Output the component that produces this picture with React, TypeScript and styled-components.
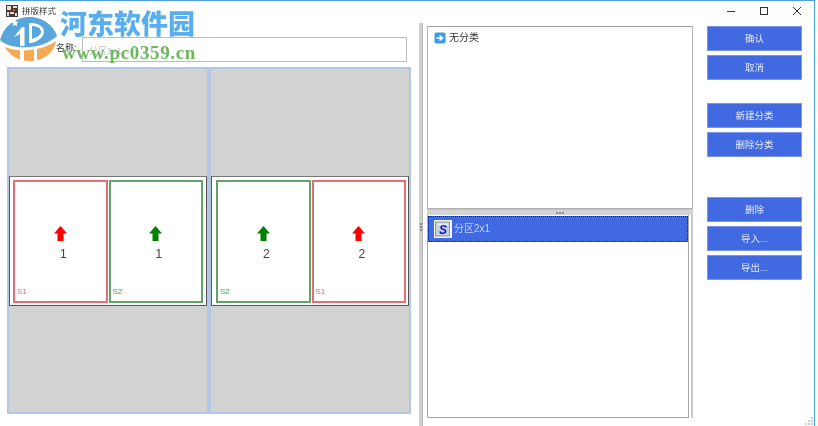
import React from "react";
import styled, { createGlobalStyle } from "styled-components";

const GlobalStyle = createGlobalStyle`
  html, body {
    margin: 0;
    padding: 0;
    background: #fff;
    overflow: hidden;
  }
  body {
    font-family: "Liberation Sans", "Noto Sans CJK SC", sans-serif;
  }
`;

const App: React.FC = () => {
  return (
    <>
      <GlobalStyle />
      <Window>
        <TitleBar>
          <AppIcon />
          <TitleText>拼版样式</TitleText>
          <WindowControls>
            <ControlButton>
              <svg width="10" height="10" viewBox="0 0 10 10">
                <path d="M1 5.500h8" stroke="#333" strokeWidth="1" />
              </svg>
            </ControlButton>
            <ControlButton>
              <svg width="10" height="10" viewBox="0 0 10 10">
                <rect x="1.500" y="1.500" width="7" height="7" fill="none" stroke="#333" strokeWidth="1" />
              </svg>
            </ControlButton>
            <ControlButton>
              <svg width="10" height="10" viewBox="0 0 10 10">
                <path d="M1 1l8 8M9 1l-8 8" stroke="#333" strokeWidth="1" />
              </svg>
            </ControlButton>
          </WindowControls>
        </TitleBar>
        <Body>
          <LeftPane>
            <NameRow>
              <NameLabel>名称:</NameLabel>
              <NameInput>分区2x1</NameInput>
            </NameRow>
            <Sheet>
              <Page>
                <Band $lead={3}>
                  <Card $edge="#e66e72">
                    <UpArrow color="#ff0000" />
                    <CardNumber>1</CardNumber>
                    <CardTag $tint="#f4666a">S1</CardTag>
                  </Card>
                  <Card $edge="#62a467">
                    <UpArrow color="#008000" />
                    <CardNumber>1</CardNumber>
                    <CardTag $tint="#44a84e">S2</CardTag>
                  </Card>
                </Band>
              </Page>
              <Page>
                <Band $lead={4}>
                  <Card $edge="#62a467">
                    <UpArrow color="#008000" />
                    <CardNumber>2</CardNumber>
                    <CardTag $tint="#44a84e">S2</CardTag>
                  </Card>
                  <Card $edge="#e66e72">
                    <UpArrow color="#ff0000" />
                    <CardNumber>2</CardNumber>
                    <CardTag $tint="#f4666a">S1</CardTag>
                  </Card>
                </Band>
              </Page>
            </Sheet>
          </LeftPane>
          <VerticalSplitter>
            <GripDots $vertical />
          </VerticalSplitter>
          <RightPane>
            <ListColumn>
              <CategoryList>
                <CategoryRow>
                  <svg width="12" height="12" viewBox="0 0 12 12">
                    <rect x="0.500" y="0.500" width="11" height="11" rx="2" fill="#3a9be8" />
                    <path d="M2.500 6h5M5.500 3.500L8.500 6l-3 2.500" fill="none" stroke="#fff" strokeWidth="1.600" />
                  </svg>
                  <RowLabel>无分类</RowLabel>
                </CategoryRow>
              </CategoryList>
              <HorizontalSplitter>
                <GripDots />
              </HorizontalSplitter>
              <LowerRow>
                <TemplateList>
                  <TemplateRow>
                    <svg width="18" height="18" viewBox="0 0 18 18">
                      <rect width="18" height="18" fill="#f4f6f8" />
                      <rect x="1.500" y="2" width="14" height="14" fill="#c6d0d6" stroke="#8d9aa2" />
                      <path d="M3 3.500h11v2H3z" fill="#e8edf0" />
                      <text x="5" y="14" fontSize="12" fontWeight="700" fontStyle="italic" fill="#1414e0" fontFamily="Liberation Sans">
                        S
                      </text>
                    </svg>
                    <RowLabel>分区2x1</RowLabel>
                  </TemplateRow>
                </TemplateList>
                <ListEdge />
              </LowerRow>
            </ListColumn>
            <ButtonColumn>
              <ButtonGroup>
                <ActionButton>确认</ActionButton>
                <ActionButton>取消</ActionButton>
              </ButtonGroup>
              <ButtonGroup $top={23}>
                <ActionButton>新建分类</ActionButton>
                <ActionButton>删除分类</ActionButton>
              </ButtonGroup>
              <ButtonGroup $top={40}>
                <ActionButton>删除</ActionButton>
                <ActionButton>导入...</ActionButton>
                <ActionButton>导出...</ActionButton>
              </ButtonGroup>
            </ButtonColumn>
          </RightPane>
        </Body>

        {/* watermark sits on top of the window */}
        <Watermark>
          <LogoMark width="57" height="46" viewBox="0 0 57 46">
            <path d="M0 25C4 10 16 2 30 2c14 0 24 10 27 19-7 6-15 10-27 11C16 33 6 31 0 25z" fill="#58a6dc" />
            <path d="M5 32c15 6 37 4 51-6-2 12-12 20-26 20C18 46 9 40 5 32z" fill="#f6a94e" />
            <path d="M20 31V19l-6 3 8-10h2.500v19z" fill="#fff" />
            <path d="M29 8h2c8 0 13 4 13 9 0 5-6 9-12 11h-3z" fill="#fff" />
            <path d="M32 11v13c5-2 9-4 9-7 0-4-4-6-9-6z" fill="#58a6dc" />
            <path d="M20 34h4v12h-4zM34 34h3v12h-3z" fill="#fff" />
            <path d="M15 4l1 2.600 2.600.3-2 1.700.6 2.600-2.200-1.400-2.200 1.400.6-2.600-2-1.700 2.600-.3z" fill="#fff" />
          </LogoMark>
          <WatermarkText>
            <WatermarkName>河东软件园</WatermarkName>
            <WatermarkUrl>www.pc0359.cn</WatermarkUrl>
          </WatermarkText>
        </Watermark>

        <ResizeGrip>
          <svg width="9" height="9" viewBox="0 0 9 9" fill="#c4cfdc">
            <rect x="7" y="1" width="2" height="2" />
            <rect x="4" y="4" width="2" height="2" />
            <rect x="7" y="4" width="2" height="2" />
            <rect x="1" y="7" width="2" height="2" />
            <rect x="4" y="7" width="2" height="2" />
            <rect x="7" y="7" width="2" height="2" />
          </svg>
        </ResizeGrip>
      </Window>
    </>
  );
};

const AppIcon: React.FC = () => (
  <svg width="12" height="12" viewBox="0 0 12 12">
    <rect width="12" height="12" fill="#4a3a34" />
    <rect x="1" y="1" width="4" height="4" fill="#e8ded8" />
    <rect x="7" y="1" width="4" height="2" fill="#e8ded8" />
    <rect x="7" y="4" width="2" height="2" fill="#c9503c" />
    <rect x="1" y="7" width="2" height="4" fill="#e8ded8" />
    <rect x="4" y="7" width="4" height="2" fill="#e8ded8" />
    <rect x="9" y="8" width="2" height="3" fill="#e8ded8" />
  </svg>
);

const UpArrow: React.FC<{ color: string }> = ({ color }) => (
  <ArrowIcon width="13" height="15" viewBox="0 0 13 15">
    <path d="M6.500 0L13 7.500H9.500V15h-6V7.500H0z" fill={color} />
  </ArrowIcon>
);

export default App;

const Window = styled.div`
  position: relative;
  box-sizing: border-box;
  width: 815px;
  height: 426px;
  display: flex;
  flex-direction: column;
  background: #fff;
  border-top: 1px solid #4ba3e6;
  border-right: 1px solid #4ba3e6;
  overflow: hidden;
  filter: blur(0.3px);
`;

const TitleBar = styled.div`
  box-sizing: border-box;
  flex: 0 0 22px;
  display: flex;
  align-items: center;
  padding: 0 1px 2px 6px;
  gap: 4px;
`;

const TitleText = styled.span`
  font-size: 8.500px;
  line-height: 12px;
  color: #333;
`;

const WindowControls = styled.div`
  display: flex;
  margin-left: auto;
`;

const ControlButton = styled.div`
  width: 33px;
  height: 20px;
  display: flex;
  align-items: center;
  justify-content: center;
`;

const Body = styled.div`
  flex: 1;
  display: flex;
  min-height: 0;
`;

const LeftPane = styled.div`
  box-sizing: border-box;
  flex: 0 0 419px;
  padding-left: 7px;
`;

const NameRow = styled.div`
  display: flex;
  align-items: center;
  margin-top: 14px;
  padding-left: 49px;
`;

const NameLabel = styled.span`
  flex: 0 0 26px;
  margin-top: -5px;
  font-size: 9px;
  color: #333;
`;

const NameInput = styled.div`
  box-sizing: border-box;
  width: 325px;
  height: 25px;
  padding: 6px 6px 0;
  border: 1px solid #bcbcbc;
  font-size: 9px;
  color: #c4c4c4;
`;

const Sheet = styled.div`
  box-sizing: border-box;
  width: 404px;
  height: 347px;
  margin-top: 5px;
  display: grid;
  grid-template-columns: 198px 198px;
  column-gap: 4px;
  border: 2px solid #b4c7e4;
  background: #b4c7e4;
`;

const Page = styled.div`
  display: flex;
  align-items: center;
  background: #d2d2d2;
`;

const Band = styled.div<{ $lead: number }>`
  box-sizing: border-box;
  width: 100%;
  height: 130px;
  display: flex;
  gap: 1px;
  padding: 3px 0 2px ${(props) => props.$lead}px;
  background: #fff;
  border: 1px solid #555;
  border-top-color: #777;
`;

const Card = styled.div<{ $edge: string }>`
  box-sizing: border-box;
  flex: 0 0 94.500px;
  display: flex;
  flex-direction: column;
  align-items: center;
  padding: 44px 2px 5px;
  border: 2px solid ${(props) => props.$edge};
`;

const ArrowIcon = styled.svg`
  display: block;
`;

const CardNumber = styled.span`
  margin: 6px 0 0 6px;
  font-size: 12px;
  line-height: 14px;
  color: #444;
`;

const CardTag = styled.span<{ $tint: string }>`
  margin-top: auto;
  align-self: flex-start;
  font-size: 8px;
  line-height: 9px;
  color: ${(props) => props.$tint};
`;

const VerticalSplitter = styled.div`
  flex: 0 0 4px;
  display: flex;
  align-items: flex-start;
  justify-content: center;
  padding-top: 200px;
  background: #cfcfcf;
  border-right: 1px solid #b5b5b5;
  box-sizing: border-box;
`;

const GripDots = styled.div<{ $vertical?: boolean }>`
  width: ${(props) => (props.$vertical ? "2px" : "8px")};
  height: ${(props) => (props.$vertical ? "8px" : "2px")};
  background: repeating-linear-gradient(
    ${(props) => (props.$vertical ? "180deg" : "90deg")},
    #8c8c8c 0 2px,
    transparent 2px 3px
  );
`;

const RightPane = styled.div`
  flex: 1;
  display: flex;
  gap: 14px;
  padding: 3px 0 8px 4px;
`;

const ListColumn = styled.div`
  flex: 0 0 266px;
  display: flex;
  flex-direction: column;
`;

const CategoryList = styled.div`
  box-sizing: border-box;
  height: 183px;
  padding: 5px 6px;
  border: 1px solid #b2b2b2;
  border-top-color: #a0a0a0;
`;

const CategoryRow = styled.div`
  display: flex;
  align-items: center;
  gap: 3px;
  font-size: 10px;
  color: #333;
`;

const RowLabel = styled.span`
  margin-top: -3px;
`;

const HorizontalSplitter = styled.div`
  flex: 0 0 6px;
  display: flex;
  align-items: center;
  justify-content: center;
  background: #d4d4d4;
  border-top: 1px solid #c2c2c2;
  box-sizing: border-box;
`;

const LowerRow = styled.div`
  flex: 0 0 203px;
  display: flex;
  justify-content: space-between;
`;

const TemplateList = styled.div`
  box-sizing: border-box;
  width: 262px;
  padding-top: 1px;
  border: 1px solid #a8a8a8;
  border-top: none;
`;

const TemplateRow = styled.div`
  box-sizing: border-box;
  height: 26px;
  display: flex;
  align-items: center;
  gap: 2px;
  padding-left: 6px;
  background: #4169e1;
  outline: 1px dotted #12255e;
  outline-offset: -1px;
  font-size: 10px;
  color: #c5d3f5;
`;

const ListEdge = styled.div`
  flex: 0 0 2px;
  background: #c8c8c8;
`;

const ButtonColumn = styled.div`
  flex: 0 0 95px;
  display: flex;
  flex-direction: column;
`;

const ButtonGroup = styled.div<{ $top?: number }>`
  display: flex;
  flex-direction: column;
  gap: 4px;
  margin-top: ${(props) => props.$top ?? 0}px;
`;

const ActionButton = styled.div`
  box-sizing: border-box;
  height: 25px;
  padding-bottom: 1px;
  display: flex;
  align-items: center;
  justify-content: center;
  background: #4169e1;
  border: 1px solid #7a96ec;
  font-size: 9.500px;
  color: #e4eafb;
`;

const Watermark = styled.div`
  position: absolute;
  top: 9px;
  left: 0;
  display: flex;
  gap: 3px;
  pointer-events: none;
`;

const LogoMark = styled.svg`
  flex: 0 0 57px;
  margin-top: 5px;
`;

const WatermarkText = styled.div`
  display: flex;
  flex-direction: column;
`;

const WatermarkName = styled.span`
  font-family: "Noto Sans CJK SC", sans-serif;
  font-size: 27px;
  line-height: 26px;
  font-weight: 900;
  color: #58aeee;
`;

const WatermarkUrl = styled.span`
  margin: 9px 0 0 2px;
  font-family: "Liberation Serif", serif;
  font-size: 19px;
  line-height: 16px;
  font-weight: 700;
  letter-spacing: 0.650px;
  color: #6cb85c;
`;

const ResizeGrip = styled.div`
  position: absolute;
  right: 1px;
  bottom: 1px;
  line-height: 0;
`;
